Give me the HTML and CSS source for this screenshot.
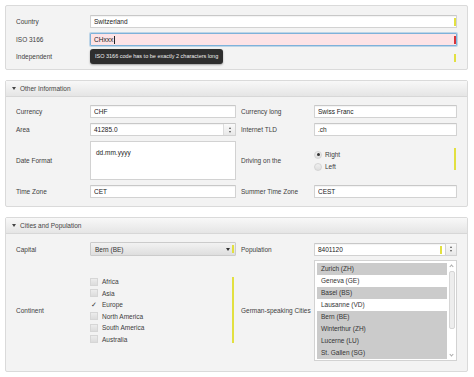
FILE: index.html
```html
<!DOCTYPE html>
<html lang="en">
<head>
    <meta charset="UTF-8">
    <title>Country Form</title>
    <link rel="stylesheet" href="styles.css">
</head>
<body>
    <div class="panel">
        <div class="form single">
            <label class="lbl">Country</label>
            <div class="field">
                <input class="text" value="Switzerland">
                <i class="mark"></i>
            </div>

            <label class="lbl">ISO 3166</label>
            <div class="field">
                <div class="text invalid">CHxxx<span class="caret"></span></div>
                <i class="mark error"></i>
                <div class="tooltip">ISO 3166 code has to be exactly 2 characters long</div>
            </div>

            <label class="lbl">Independent</label>
            <div class="field">
                <i class="mark"></i>
            </div>
        </div>
    </div>

    <div class="panel">
        <div class="panel-head"><span class="tri"></span>Other Information</div>
        <div class="form double">
            <label class="lbl">Currency</label>
            <div class="field"><input class="text" value="CHF"></div>
            <label class="lbl right">Currency long</label>
            <div class="field"><input class="text" value="Swiss Franc"></div>

            <label class="lbl">Area</label>
            <div class="field">
                <div class="text spin-in">
                    <span class="val">41285.0</span>
                    <span class="spin inner"><b class="up"></b><b class="down"></b></span>
                </div>
            </div>
            <label class="lbl right">Internet TLD</label>
            <div class="field"><input class="text" value=".ch"></div>

            <label class="lbl">Date Format</label>
            <div class="field"><textarea class="area">dd.mm.yyyy</textarea></div>
            <label class="lbl right">Driving on the</label>
            <div class="field choices">
                <div class="radio-row"><span class="radio on"></span>Right</div>
                <div class="radio-row"><span class="radio"></span>Left</div>
                <i class="mark tall"></i>
            </div>

            <label class="lbl">Time Zone</label>
            <div class="field"><input class="text" value="CET"></div>
            <label class="lbl right">Summer Time Zone</label>
            <div class="field"><input class="text" value="CEST"></div>
        </div>
    </div>

    <div class="panel">
        <div class="panel-head"><span class="tri"></span>Cities and Population</div>
        <div class="form double cities">
            <label class="lbl">Capital</label>
            <div class="field">
                <div class="combo">Bern (BE)<span class="combo-arrow"></span><i class="mark small"></i></div>
            </div>
            <label class="lbl right">Population</label>
            <div class="field spin-out">
                <div class="text">8401120<i class="mark pop"></i></div>
                <span class="spin outer"><b class="up"></b><b class="down"></b></span>
            </div>

            <label class="lbl">Continent</label>
            <div class="field checks">
                <div class="check-row"><span class="check"></span>Africa</div>
                <div class="check-row"><span class="check"></span>Asia</div>
                <div class="check-row"><span class="check on">&#10003;</span>Europe</div>
                <div class="check-row"><span class="check"></span>North America</div>
                <div class="check-row"><span class="check"></span>South America</div>
                <div class="check-row"><span class="check"></span>Australia</div>
                <i class="mark group"></i>
            </div>
            <label class="lbl right">German-speaking Cities</label>
            <div class="field">
                <div class="listbox">
                    <ul class="items">
                        <li class="sel">Zurich (ZH)</li>
                        <li>Geneva (GE)</li>
                        <li class="sel">Basel (BS)</li>
                        <li>Lausanne (VD)</li>
                        <li class="sel">Bern (BE)</li>
                        <li class="sel">Winterthur (ZH)</li>
                        <li class="sel">Lucerne (LU)</li>
                        <li class="sel">St. Gallen (SG)</li>
                    </ul>
                    <div class="scrollbar">
                        <span class="sb-up"></span>
                        <span class="sb-thumb"></span>
                        <span class="sb-down"></span>
                    </div>
                </div>
            </div>
        </div>
    </div>
</body>
</html>
```

FILE: styles.css
```css
body {
    margin: 0;
    padding: 5px 6px 5px 5px;
    background: #fff;
    font-family: "Liberation Sans", Arial, sans-serif;
    font-size: 6.5px;
    color: #3c3c3c;
}
.panel {
    background: #f3f3f3;
    border: 1px solid #dadada;
    border-radius: 2px;
    margin-bottom: 10px;
}
.panel-head {
    height: 15px;
    display: flex;
    align-items: center;
    padding-left: 6px;
    background: linear-gradient(#f8f8f8, #e5e5e5);
    border-bottom: 1px solid #d7d7d7;
    color: #444;
}
.tri {
    width: 0;
    height: 0;
    border-left: 2.5px solid transparent;
    border-right: 2.5px solid transparent;
    border-top: 3.5px solid #444;
    margin-right: 4px;
}
.form {
    display: grid;
    row-gap: 5px;
    padding: 9px 10px 8px 10px;
}
.single {
    grid-template-columns: 74px 1fr;
    grid-template-rows: 13px 13px 10px;
}
.double {
    grid-template-columns: 74px 146px 78px 1fr;
    grid-template-rows: 13px 13px 39px 13px;
    padding-top: 8px;
}
.cities {
    grid-template-rows: 14px 101px;
    row-gap: 4px;
    padding-bottom: 10px;
}
.lbl {
    display: flex;
    align-items: center;
    color: #3e3e3e;
}
.lbl.right {
    padding-left: 5px;
}
.field {
    position: relative;
    display: flex;
    align-items: center;
}
.text {
    box-sizing: border-box;
    width: 100%;
    height: 100%;
    margin: 0;
    padding: 0 3px;
    border: 1px solid #d2d2d2;
    border-top-color: #c8c8c8;
    border-radius: 1px;
    background: #fff;
    box-shadow: inset 0 1px 1px rgba(0, 0, 0, 0.05);
    font: inherit;
    color: #222;
    display: flex;
    align-items: center;
    outline: none;
}
.invalid {
    background: #fde3e6;
    border-color: #7eb2da;
    box-shadow: 0 0 0 1px rgba(126, 178, 218, 0.45);
}
.caret {
    display: inline-block;
    width: 1px;
    height: 8px;
    background: #222;
    margin-left: 0.5px;
}
.mark {
    position: absolute;
    right: 1px;
    top: 3px;
    width: 2px;
    height: 8px;
    background: #e2e040;
}
.mark.error {
    background: #d8333a;
}
.mark.tall {
    top: 7px;
    height: 22px;
}
.mark.small {
    right: 1px;
    top: 2px;
    height: 8px;
}
.mark.pop {
    right: 3px;
    top: 2px;
}
.mark.group {
    right: 2px;
    top: 17px;
    height: 66px;
}
.tooltip {
    position: absolute;
    left: 0;
    top: 16px;
    height: 15px;
    line-height: 15px;
    padding: 0 5px;
    background: #2e2e2e;
    color: #eee;
    font-size: 5.5px;
    border-radius: 3px;
    white-space: nowrap;
    box-shadow: 0 1px 2px rgba(0, 0, 0, 0.35);
    z-index: 2;
}
.spin-in {
    padding-right: 0;
    justify-content: space-between;
}
.spin {
    display: flex;
    flex-direction: column;
    justify-content: center;
    align-items: center;
    gap: 2px;
    box-sizing: border-box;
    background: linear-gradient(#fafafa, #e8e8e8);
}
.spin.inner {
    width: 12px;
    height: 100%;
    border-left: 1px solid #dcdcdc;
}
.spin.outer {
    width: 11px;
    height: 13px;
    border: 1px solid #d2d2d2;
    border-left: none;
}
.up, .down {
    width: 0;
    height: 0;
    border-left: 1.5px solid transparent;
    border-right: 1.5px solid transparent;
}
.up {
    border-bottom: 2px solid #555;
}
.down {
    border-top: 2px solid #555;
}
.spin-out .text {
    position: relative;
    height: 13px;
    flex: 1;
}
.area {
    box-sizing: border-box;
    width: 100%;
    height: 100%;
    margin: 0;
    padding: 7px 5px;
    border: 1px solid #d2d2d2;
    background: #fff;
    font: inherit;
    color: #222;
    resize: none;
    outline: none;
}
.choices {
    flex-direction: column;
    align-items: flex-start;
    justify-content: center;
}
.radio-row, .check-row {
    display: flex;
    align-items: center;
    gap: 3px;
    height: 12px;
}
.check-row {
    height: 11.5px;
    gap: 4px;
}
.radio {
    box-sizing: border-box;
    width: 8px;
    height: 8px;
    border-radius: 50%;
    border: 1px solid #d4d4d4;
    background: linear-gradient(#f0f0f0, #dedede);
    display: flex;
    align-items: center;
    justify-content: center;
}
.radio.on::after {
    content: "";
    width: 3px;
    height: 3px;
    border-radius: 50%;
    background: #333;
}
.checks {
    flex-direction: column;
    align-items: flex-start;
    justify-content: center;
}
.check {
    box-sizing: border-box;
    width: 8px;
    height: 8px;
    border: 1px solid #d6d6d6;
    background: linear-gradient(#ececec, #dcdcdc);
    display: flex;
    align-items: center;
    justify-content: center;
    font-size: 7px;
    color: #333;
    line-height: 1;
}
.check.on {
    background: none;
    border-color: transparent;
}
.combo {
    position: relative;
    box-sizing: border-box;
    width: 100%;
    height: 100%;
    display: flex;
    align-items: center;
    padding-left: 4px;
    border: 1px solid #cbcbcb;
    border-radius: 1px;
    background: linear-gradient(#f2f2f2, #dedede);
    color: #333;
}
.combo-arrow {
    position: absolute;
    right: 5px;
    top: 5px;
    width: 0;
    height: 0;
    border-left: 2.5px solid transparent;
    border-right: 2.5px solid transparent;
    border-top: 3px solid #333;
}
.listbox {
    box-sizing: border-box;
    width: 100%;
    height: 100%;
    display: flex;
    border: 1px solid #d2d2d2;
    background: #fff;
    overflow: hidden;
}
.items {
    list-style: none;
    margin: 0;
    padding: 2px 0 0 2px;
    flex: 1;
}
.items li {
    height: 12px;
    line-height: 12px;
    padding-left: 4px;
    color: #333;
}
.items li.sel {
    background: #cbcbcb;
}
.scrollbar {
    width: 9px;
    display: flex;
    flex-direction: column;
    align-items: center;
    padding: 3px 0;
    box-sizing: border-box;
}
.sb-up, .sb-down {
    width: 3px;
    height: 3px;
    border-left: 1px solid #aaa;
    border-top: 1px solid #aaa;
    box-sizing: border-box;
}
.sb-up {
    transform: rotate(45deg);
    margin-top: 1px;
}
.sb-down {
    transform: rotate(225deg);
    margin-top: auto;
    margin-bottom: 1px;
}
.sb-thumb {
    width: 4px;
    height: 56px;
    margin-top: 3px;
    border: 1px solid #d6d6d6;
    border-radius: 2px;
    background: #ededed;
}
```
